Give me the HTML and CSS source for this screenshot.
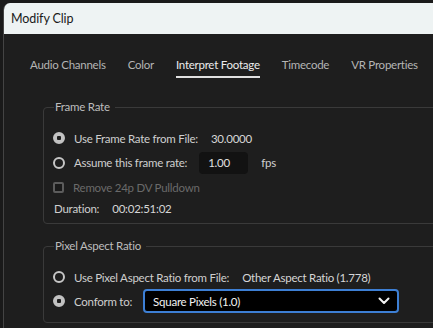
FILE: index.html
```html
<!DOCTYPE html>
<html lang="en">
<head>
    <meta charset="UTF-8">
    <title>Modify Clip</title>
    <link rel="stylesheet" href="styles.css">
</head>
<body>
    <div class="window">
        <div class="titlebar">Modify Clip</div>

        <div class="tabs">
            <span class="tab">Audio Channels</span>
            <span class="tab">Color</span>
            <span class="tab active">Interpret Footage</span>
            <span class="tab">Timecode</span>
            <span class="tab">VR Properties</span>
        </div>

        <!-- Frame Rate -->
        <fieldset class="group frame-rate">
            <legend>Frame Rate</legend>
            <label class="row">
                <input type="radio" name="rate" checked>
                <span>Use Frame Rate from File:</span>
                <span class="value">30.0000</span>
            </label>
            <label class="row row-input">
                <input type="radio" name="rate">
                <span>Assume this frame rate:</span>
                <input type="text" class="num" value="1.00">
                <span>fps</span>
            </label>
            <label class="row disabled">
                <input type="checkbox" disabled>
                <span>Remove 24p DV Pulldown</span>
            </label>
            <div class="row row-info">
                <span>Duration:</span>
                <span class="value">00:02:51:02</span>
            </div>
        </fieldset>

        <!-- Pixel Aspect Ratio -->
        <fieldset class="group aspect">
            <legend>Pixel Aspect Ratio</legend>
            <label class="row">
                <input type="radio" name="par">
                <span>Use Pixel Aspect Ratio from File:</span>
                <span class="value">Other Aspect Ratio (1.778)</span>
            </label>
            <label class="row row-select">
                <input type="radio" name="par" checked>
                <span>Conform to:</span>
                <div class="select">
                    <span>Square Pixels (1.0)</span>
                    <svg width="12" height="8" viewBox="0 0 12 8"><path d="M1.5 1.5 L6 6 L10.5 1.5" fill="none" stroke="#f2f2f2" stroke-width="2" stroke-linecap="round" stroke-linejoin="round"/></svg>
                </div>
            </label>
        </fieldset>
    </div>
</body>
</html>
```

FILE: styles.css
```css
body {
    margin: 0;
    padding: 3px 0 0 3px;
    background-color: #1a1a1a;
    font-family: Lato, "Open Sans", sans-serif;
    font-size: 11.5px;
    letter-spacing: -0.25px;
    overflow: hidden;
    height: 325px;
}
.window {
    width: 470px;
    height: 330px;
    background-color: #1e1e1e;
    border-left: 1px solid #444;
    border-top-left-radius: 7px;
    overflow: hidden;
}
.titlebar {
    height: 31px;
    line-height: 31px;
    padding-left: 7px;
    background-color: #eef3f3;
    color: #1a1a1a;
    font-size: 12.5px;
    letter-spacing: -0.1px;
}
.tabs {
    display: flex;
    gap: 22px;
    padding: 23px 0 0 26px;
}
.tab {
    line-height: 16px;
    padding-bottom: 3px;
    border-bottom: 2px solid transparent;
    color: #b5b5b5;
}
.tab.active {
    color: #ececec;
    border-bottom-color: #e0e0e0;
}
.group {
    margin: 21px 0 0 39px;
    padding: 11px 0 6px 10px;
    border: 1px solid #3a3a3a;
    border-radius: 4px;
    min-inline-size: 0;
}
.group legend {
    padding: 0 5px 0 1px;
    line-height: 16px;
    color: #bdbdbd;
}
.aspect {
    margin-top: 14px;
    padding-bottom: 9px;
}
.row {
    display: flex;
    align-items: center;
    gap: 9px;
    height: 24px;
    color: #cfcfcf;
}
.row-input {
    height: 25px;
}
.row-info {
    height: 18px;
    gap: 13px;
}
.row .value {
    margin-left: 4px;
    color: #d6d6d6;
}
.row-info .value {
    margin-left: 0;
}
.disabled {
    color: #6a6a6a;
}
input[type="radio"] {
    appearance: none;
    margin: 0 0 0 -1px;
    width: 12px;
    height: 12px;
    border: 2px solid #c6c6c6;
    border-radius: 50%;
    background-color: #1e1e1e;
}
input[type="radio"]:checked {
    background: radial-gradient(circle, #1e1e1e 0 2px, #c2c2c2 2.5px);
    border-color: #c2c2c2;
}
input[type="checkbox"] {
    appearance: none;
    margin: 0 0 0 -1px;
    width: 11px;
    height: 11px;
    border: 2px solid #5c5c5c;
    border-radius: 2px;
    background-color: #1a1a1a;
}
.num {
    margin: 0 4px 0 3px;
    width: 49px;
    height: 22px;
    box-sizing: border-box;
    padding: 0 0 0 9px;
    border: none;
    border-radius: 4px;
    background-color: #121212;
    color: #e0e0e0;
    font-family: inherit;
    font-size: 11.5px;
    letter-spacing: -0.25px;
}
.select {
    display: flex;
    align-items: center;
    justify-content: space-between;
    margin-left: 2px;
    width: 256px;
    height: 24px;
    box-sizing: border-box;
    padding: 0 7px 0 8px;
    border: 2px solid #3d7fd4;
    border-radius: 4px;
    background-color: #000;
    color: #f2f2f2;
}
```
